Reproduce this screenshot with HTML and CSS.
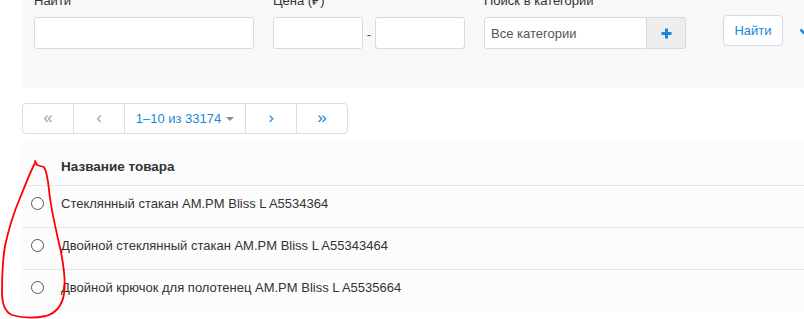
FILE: index.html
```html
<!DOCTYPE html>
<html lang="ru">
<head>
<meta charset="utf-8">
<title>Товары</title>
<link rel="stylesheet" href="styles.css">
</head>
<body>
<div class="page">
  <form class="filters">
    <div class="field field-q">
      <label class="label">Найти</label>
      <input class="input input-q" type="text">
    </div>
    <div class="field field-price">
      <label class="label">Цена (₽)</label>
      <div class="range">
        <input class="input input-short" type="text">
        <span class="dash">-</span>
        <input class="input input-short" type="text">
      </div>
    </div>
    <div class="field field-cat">
      <label class="label">Поиск в категории</label>
      <div class="group">
        <input class="input input-cat" type="text" value="Все категории" readonly>
        <span class="addon">
          <svg width="11" height="11" viewBox="0 0 11 11"><path d="M5.5 0.5v10M0.5 5.5h10" stroke="#1a88d8" stroke-width="3"/></svg>
        </span>
      </div>
    </div>
    <div class="field field-btn">
      <button class="btn" type="button">Найти</button>
    </div>
    <span class="more">
      <svg width="12" height="8" viewBox="0 0 12 8"><path d="M1.5 1.5l4.5 4.5 4.5-4.5" fill="none" stroke="#1a88d8" stroke-width="2.5"/></svg>
    </span>
  </form>

  <nav class="pager">
    <a class="pg pg-dis"><span class="arr">«</span></a>
    <a class="pg pg-dis"><span class="arr">‹</span></a>
    <a class="pg pg-cur">1–10 из 33174<span class="caret"></span></a>
    <a class="pg"><span class="arr">›</span></a>
    <a class="pg"><span class="arr">»</span></a>
  </nav>

  <table class="list">
    <thead>
      <tr><th class="c-sel"></th><th class="c-name">Название товара</th></tr>
    </thead>
    <tbody>
      <tr><td class="c-sel"><input class="radio" type="radio" name="p"></td><td class="c-name">Стеклянный стакан AM.PM Bliss L A5534364</td></tr>
      <tr><td class="c-sel"><input class="radio" type="radio" name="p"></td><td class="c-name">Двойной стеклянный стакан AM.PM Bliss L A55343464</td></tr>
      <tr class="last"><td class="c-sel"><input class="radio" type="radio" name="p"></td><td class="c-name">Двойной крючок для полотенец AM.PM Bliss L A5535664</td></tr>
    </tbody>
  </table>
</div>

<svg class="mark" width="804" height="319" viewBox="0 0 804 319">
  <path d="M35 161 L37 165 Q40 166 44 167 C47 172 48 180 49 190 C51 210 56 230 61 252 C64 268 66 282 64 294 C62 306 56 313 46 316 C36 318 22 318 12 315 C5 312 2 305 2 292 C2 275 3 258 5 246 C8 232 14 212 20 198 C25 186 30 172 35 163" fill="none" stroke="#ff0000" stroke-width="1.8" stroke-linecap="round" stroke-linejoin="round"/>
</svg>
</body>
</html>
```

FILE: styles.css
```css
html, body {
  margin: 0;
  background: #fff;
  overflow: hidden;
}

body {
  font-family: "Liberation Sans", Arial, sans-serif;
  font-size: 13px;
  color: #333;
}

.page {
  padding-left: 22px;
}

/* filter panel */
.filters {
  display: flex;
  align-items: flex-start;
  margin: -18px 0 0 0;
  padding: 10px 0 39px 12px;
  background: #f8f8f8;
  border-bottom-left-radius: 4px;
}

.field {
  display: flex;
  flex-direction: column;
}

.label {
  line-height: 18px;
  margin-bottom: 7px;
  color: #333;
}

.field-q {
  margin-right: 19px;
}

.field-price {
  margin-right: 19px;
}

.field-cat {
  margin-right: 37px;
}

.input {
  box-sizing: border-box;
  height: 32px;
  margin: 0;
  padding: 0 6px;
  border: 1px solid #d3dae2;
  border-radius: 3px;
  background: #fff;
  font: inherit;
  color: #555;
  outline: none;
}

.input-q {
  width: 220px;
}

.range {
  display: flex;
  align-items: flex-start;
  height: 32px;
}

.input-short {
  width: 90px;
}

.dash {
  width: 12px;
  text-align: center;
  line-height: 29px;
  padding-top: 3px;
  color: #555;
}

.group {
  display: flex;
}

.input-cat {
  width: 163px;
  border-radius: 3px 0 0 3px;
}

.addon {
  box-sizing: border-box;
  width: 39px;
  height: 32px;
  display: flex;
  align-items: center;
  justify-content: center;
  background: #eeeeee;
  border: 1px solid #d3dae2;
  border-left: 0;
  border-radius: 0 3px 3px 0;
}

.field-btn {
  padding-top: 23px;
}

.btn {
  box-sizing: border-box;
  width: 60px;
  height: 31px;
  padding: 0;
  border: 1px solid #d3dae2;
  border-radius: 4px;
  background: #fff;
  color: #1a88d8;
  font: inherit;
}

.more {
  display: block;
  margin-left: 16px;
  padding-top: 36px;
  line-height: 0;
}

/* pager */
.pager {
  display: flex;
  width: max-content;
  margin-top: 15px;
  border: 1px solid #d5dde5;
  border-radius: 4px;
}

.pg {
  width: 50px;
  height: 29px;
  display: flex;
  align-items: center;
  justify-content: center;
  border-left: 1px solid #d5dde5;
  color: #1a88d8;
  font-size: 13px;
}

.pg:first-child {
  border-left: 0;
}

.pg-dis {
  color: #9aa3ab;
}

.arr {
  font-size: 17px;
  line-height: 17px;
  margin-top: -2px;
}

.pg-cur {
  width: 120px;
}

.caret {
  display: inline-block;
  margin-left: 5px;
  border-top: 4px solid #8a8a8a;
  border-left: 4px solid transparent;
  border-right: 4px solid transparent;
}

/* list */
.list {
  width: 100%;
  margin-top: 8px;
  border-collapse: separate;
  border-spacing: 0;
  background: #fcfcfc;
}

.list th,
.list td {
  padding: 0;
  text-align: left;
  border-bottom: 1px solid #e6e6e6;
}

.list th {
  padding-top: 7px;
  line-height: 36px;
  font-size: 13.5px;
  font-weight: bold;
  color: #333;
}

.list td {
  line-height: 36px;
  padding-bottom: 5px;
  color: #333;
}

.list tr.last td {
  border-bottom: 0;
}

.list .c-sel {
  width: 31px;
  vertical-align: top;
}

.list td.c-sel {
  padding-top: 11px;
  padding-bottom: 0;
  line-height: 0;
}

.list .c-name {
  padding-left: 8px;
}

.radio {
  appearance: none;
  -webkit-appearance: none;
  display: block;
  box-sizing: border-box;
  width: 13px;
  height: 13px;
  margin: 0 0 0 9px;
  border: 1px solid #555;
  border-radius: 50%;
  background: #fff;
}

/* hand-drawn annotation over the list */
.mark {
  position: absolute;
  left: 0;
  top: 0;
  pointer-events: none;
}
```
